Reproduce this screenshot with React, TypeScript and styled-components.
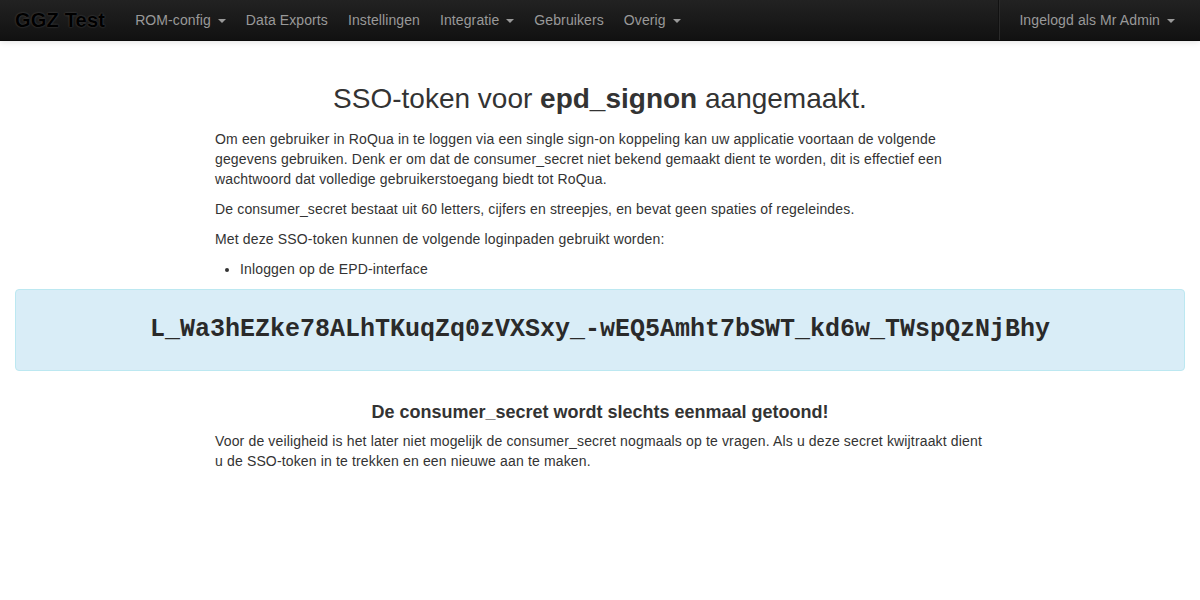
import React from "react";
import styled, { createGlobalStyle } from "styled-components";

const GlobalStyle = createGlobalStyle`
  body {
    margin: 0;
    background: #ffffff;
    font-family: "Liberation Sans", Arial, sans-serif;
    font-size: 14px;
    line-height: 20px;
    color: #333333;
  }
`;

const Navbar = styled.div`
  height: 40px;
  background: linear-gradient(#222222, #111111);
  border-bottom: 1px solid #0a0a0a;
  box-shadow: 0 1px 6px rgba(0, 0, 0, 0.12);
`;

const NavContainer = styled.div`
  display: flex;
  align-items: stretch;
  height: 40px;
  margin: 0 15px;
`;

const Brand = styled.a`
  display: block;
  padding: 10px 20px 9px 0;
  font-size: 20px;
  font-weight: bold;
  letter-spacing: 0.2px;
  color: #000000;
  text-shadow: 0 0 2px rgba(255, 255, 255, 0.25);
  text-decoration: none;
`;

const NavList = styled.ul`
  display: flex;
  margin: 0;
  padding: 0;
  list-style: none;
`;

const NavItem = styled.li`
  display: flex;
  align-items: center;
  padding: 0 10px;
  color: #999999;
  font-size: 14px;
  letter-spacing: 0.1px;
  cursor: pointer;
`;

const Caret = styled.span`
  display: inline-block;
  width: 0;
  height: 0;
  margin-left: 7px;
  margin-top: 1px;
  border-top: 4px solid #999999;
  border-left: 4px solid transparent;
  border-right: 4px solid transparent;
`;

const Spacer = styled.div`
  flex: 1;
`;

const Divider = styled.div`
  width: 0;
  border-left: 1px solid #111111;
  border-right: 1px solid #2a2a2a;
`;

const UserItem = styled(NavItem)`
  padding: 0 10px 0 19px;
`;

const Content = styled.div<{ $top?: number }>`
  width: 770px;
  margin: 0 auto;
  padding-top: ${(p) => p.$top ?? 0}px;
`;

const Title = styled.h2`
  margin: 0 0 10px;
  font-size: 28px;
  font-weight: normal;
  line-height: 40px;
  text-align: center;
  color: #333333;
`;

const Paragraph = styled.p`
  margin: 0 0 10px;
  letter-spacing: 0.15px;
`;

const List = styled.ul`
  margin: 0 0 10px 25px;
  padding: 0;
  letter-spacing: 0.15px;
`;

const TokenBox = styled.div`
  margin: 0 15px;
  padding: 20px;
  background: #d9edf7;
  border: 1px solid #bce8f1;
  border-radius: 4px;
  text-align: center;
  font-family: "Liberation Mono", "Courier New", monospace;
  font-weight: bold;
  font-size: 25px;
  line-height: 40px;
  color: #2a2a2a;
`;

const Warning = styled.h4`
  margin: 31px 0 9px;
  font-size: 18px;
  font-weight: bold;
  line-height: 20px;
  text-align: center;
`;

const navItems = [
  { label: "ROM-config", dropdown: true },
  { label: "Data Exports" },
  { label: "Instellingen" },
  { label: "Integratie", dropdown: true },
  { label: "Gebruikers" },
  { label: "Overig", dropdown: true },
];

export default function App() {
  return (
    <>
      <GlobalStyle />
      <Navbar>
        <NavContainer>
          <Brand href="#">GGZ Test</Brand>
          <NavList>
            {navItems.map((item) => (
              <NavItem key={item.label}>
                {item.label}
                {item.dropdown && <Caret />}
              </NavItem>
            ))}
          </NavList>
          <Spacer />
          <Divider />
          <NavList>
            <UserItem>
              Ingelogd als Mr Admin
              <Caret />
            </UserItem>
          </NavList>
        </NavContainer>
      </Navbar>

      <Content $top={38}>
        <Title>
          SSO-token voor <b>epd_signon</b> aangemaakt.
        </Title>
        <Paragraph>
          Om een gebruiker in RoQua in te loggen via een single sign-on koppeling
          kan uw applicatie voortaan de volgende gegevens gebruiken. Denk er om
          dat de consumer_secret niet bekend gemaakt dient te worden, dit is
          effectief een wachtwoord dat volledige gebruikerstoegang biedt tot
          RoQua.
        </Paragraph>
        <Paragraph>
          De consumer_secret bestaat uit 60 letters, cijfers en streepjes, en
          bevat geen spaties of regeleindes.
        </Paragraph>
        <Paragraph>
          Met deze SSO-token kunnen de volgende loginpaden gebruikt worden:
        </Paragraph>
        <List>
          <li>Inloggen op de EPD-interface</li>
        </List>
      </Content>

      <TokenBox>L_Wa3hEZke78ALhTKuqZq0zVXSxy_-wEQ5Amht7bSWT_kd6w_TWspQzNjBhy</TokenBox>

      <Content>
        <Warning>De consumer_secret wordt slechts eenmaal getoond!</Warning>
        <Paragraph>
          Voor de veiligheid is het later niet mogelijk de consumer_secret
          nogmaals op te vragen. Als u deze secret kwijtraakt dient u de
          SSO-token in te trekken en een nieuwe aan te maken.
        </Paragraph>
      </Content>
    </>
  );
}
